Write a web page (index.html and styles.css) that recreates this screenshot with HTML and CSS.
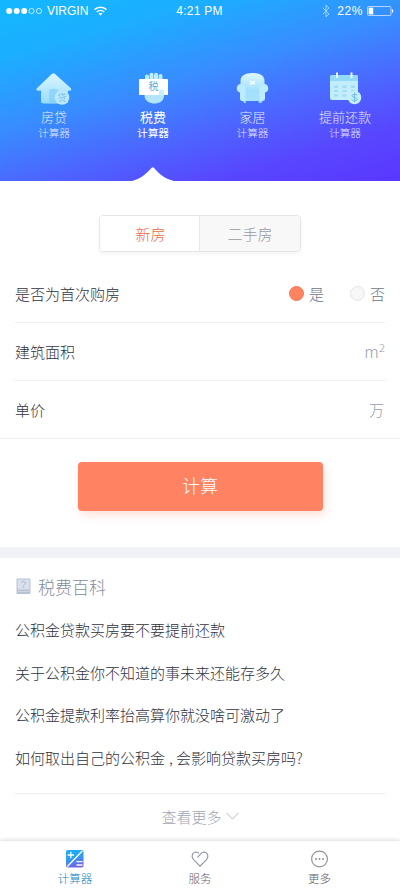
FILE: index.html
```html
<!DOCTYPE html>
<html lang="zh-CN">
<head>
<meta charset="utf-8">
<meta name="viewport" content="width=device-width, initial-scale=1">
<title>税费计算器</title>
<link rel="stylesheet" href="styles.css">
</head>
<body>
<div class="app">
  <header class="hero">
    <div class="status">
      <div class="status-left">
        <svg width="37" height="8" viewBox="0 0 37 8"><g fill="#fff"><circle cx="4.2" cy="4" r="3"/><circle cx="11.7" cy="4" r="3"/><circle cx="19.200" cy="4" r="3"/></g><g fill="none" stroke="#fff" stroke-width=".7"><circle cx="26.500" cy="4" r="2.6"/><circle cx="34" cy="4" r="2.6"/></g></svg>
        <span class="carrier">VIRGIN</span>
        <svg width="13" height="10" viewBox="0 0 13 10" fill="none" stroke="#fff" stroke-width="1.6"><path d="M.6 3.6a8.5 8.5 0 0 1 11.8 0M2.8 6a5.4 5.4 0 0 1 7.4 0"/><path d="M4.6 7.6a2.8 2.8 0 0 1 3.8 0L6.5 9.7z" fill="#fff" stroke="none"/></svg>
      </div>
      <span class="time">4:21 PM</span>
      <div class="status-right">
        <svg width="8" height="14" viewBox="0 0 8 14" fill="none" stroke="#a9dcff" stroke-width=".9"><path d="M.7 3.7l6.2 6.2L4 13V1l2.9 3.1L.7 10.3"/></svg>
        <span class="percent">22%</span>
        <svg width="27" height="10" viewBox="0 0 27 10"><rect x=".5" y=".5" width="23.5" height="9" rx="1" fill="none" stroke="#d5e5ff" stroke-width=".8"/><rect x="1.6" y="1.6" width="4.6" height="6.8" fill="#fff"/><path d="M25 3a2.2 2.2 0 0 1 0 4z" fill="#fff"/></svg>
      </div>
    </div>
    <nav class="tools">
      <a class="tool">
        <svg class="tool-icon" width="40" height="34" viewBox="0 0 40 34">
          <defs><linearGradient id="ice" x1="0" y1="0" x2="0" y2="1"><stop stop-color="#dcf6ff"/><stop offset="1" stop-color="#97dcfc"/></linearGradient></defs>
          <path d="M17.8 2.1q1.6-1.5 3.2 0l15.6 14c1.4 1.3.7 2.6-1 2.6H34V29q0 2.5-2.5 2.500h-22Q7 31.500 7 29V18.700H4.300c-2 0-2.700-1.300-1.200-2.600z" fill="url(#ice)"/>
          <path d="M15 31.500V19q0-2 2-2h5.500q2 0 2 2v12.500z" fill="#7ccbfa" opacity=".6"/>
          <circle cx="28" cy="25.500" r="7.300" fill="#bbe8fd"/>
          <text class="coin" x="28" y="29" text-anchor="middle">贷</text>
        </svg>
        <span class="tool-name">房贷</span><span class="tool-sub">计算器</span>
      </a>
      <a class="tool active">
        <svg class="tool-icon" width="40" height="34" viewBox="0 0 40 34">
          <g fill="#bcecff"><rect x="12" y="2.500" width="4" height="10" rx="2"/><rect x="16.500" y=".8" width="4" height="10" rx="2"/><rect x="21" y=".8" width="4" height="10" rx="2"/><rect x="25.500" y="2" width="4" height="10" rx="2"/></g>
          <path d="M11.500 21H31v3c0 5-5 7.500-9.500 7.500s-10-2.500-10-7.500z" fill="#b0e5fd"/>
          <rect x="6" y="7" width="29" height="16" rx=".8" fill="#fff"/>
          <path d="M26 23v-3q0-2.500 2.500-2.500T31 20v4z" fill="#c7edff"/>
          <text class="card-mark" x="20.500" y="18.400" text-anchor="middle">税</text>
        </svg>
        <span class="tool-name">税费</span><span class="tool-sub">计算器</span>
      </a>
      <a class="tool">
        <svg class="tool-icon" width="40" height="34" viewBox="0 0 40 34">
          <path d="M9 28h4v3H11zM25 28h5l-1.500 3H26z" fill="#93d7fa"/>
          <path d="M7.500 22V9c0-5 4-8 12-8s12 3 12 8v13z" fill="url(#ice)"/>
          <path d="M11 20h17v9H11z" fill="#a5e1fc"/>
          <path d="M8 12c3.500 0 5 2.500 4.500 5.500V29H9.500Q7 29 7 26.500V20.500c-4.500-1-4.500-8.500 1-8.500zM31 12c-3.500 0-5 2.500-4.500 5.500V29h3Q32 29 32 26.500V20.500c4.500-1 4.500-8.500-1-8.500z" fill="#bdebff"/>
          <path d="M17 9l5 3.500M22 9l-5 3.500" stroke="#fff" stroke-width="1.300"/>
        </svg>
        <span class="tool-name">家居</span><span class="tool-sub">计算器</span>
      </a>
      <a class="tool">
        <svg class="tool-icon" width="40" height="34" viewBox="0 0 40 34">
          <rect x="5" y="3" width="28" height="25" rx="2" fill="#c1edfd"/>
          <path d="M5 9V5q0-2 2-2h24q2 0 2 2v4z" fill="#94dafc"/>
          <path d="M12 .5v5.500M26.500 .5v5.500" stroke="#e9faff" stroke-width="2"/>
          <path d="M9 13.500h4V16H9zm8.500 0h4V16h-4zm8.500 0h4V16h-4zM9 18h4v2H9zm8.500 0h4v2h-4zm8.500 0h4v2h-4zM9 22.500h4v2H9zm8.500 0h4v2h-4z" fill="#9fdcfa"/>
          <circle cx="29.500" cy="25.500" r="6.800" fill="#c5efff"/>
          <path d="M32.200 23.300c-.8-1.500-5.300-1.500-5.300.5 0 2.200 5.500 1.200 5.500 3.500 0 2-4.800 2-5.800.2M29.500 20.600v9.800" fill="none" stroke="#74bdf2" stroke-width="1"/>
        </svg>
        <span class="tool-name">提前还款</span><span class="tool-sub">计算器</span>
      </a>
    </nav>
    <svg class="notch" width="42" height="14" viewBox="0 0 42 14"><path d="M0 14C8.500 12 13 8 19.700 .8q1.100-1 2.200 0C28 8 33 12 42 14z" fill="#fff"/></svg>
  </header>

  <main>
    <section class="form">
      <div class="segmented"><span class="segment selected">新房</span><span class="segment">二手房</span></div>
      <div class="row">
        <span>是否为首次购房</span>
        <div class="choices"><span class="choice"><i class="radio checked"></i>是</span><span class="choice"><i class="radio"></i>否</span></div>
      </div>
      <div class="row"><span>建筑面积</span><span class="unit area">m<sup>2</sup></span></div>
      <div class="row"><span>单价</span><span class="unit">万</span></div>
      <div class="action"><button class="submit">计算</button></div>
    </section>
    <section class="wiki">
      <h2 class="wiki-title">
        <svg width="15" height="17" viewBox="0 0 15 17"><rect x=".5" y=".5" width="14" height="15.500" rx="1" fill="#b8c2d5"/><rect x="1.500" y="1.500" width="12" height="10" fill="#d9e0ec"/><path d="M1.500 13.500h12" stroke="#cfd6e3"/><path d="M5.600 5c0-2.200 3.800-2 3.800 0 0 1.300-1.900 1.200-1.900 2.700M7.500 8.800V10" fill="none" stroke="#a9b5ca"/></svg>
        税费百科
      </h2>
      <ul class="articles">
        <li>公积金贷款买房要不要提前还款</li>
        <li>关于公积金你不知道的事未来还能存多久</li>
        <li>公积金提款利率抬高算你就没啥可激动了</li>
        <li>如何取出自己的公积金<span class="comma">,</span>会影响贷款买房吗?</li>
      </ul>
      <div class="more">查看更多<svg width="13" height="8" viewBox="0 0 13 8" fill="none" stroke="#b5bac7"><path d="M.7 1l5.800 6 5.800-6"/></svg></div>
    </section>
  </main>

  <nav class="tabbar">
    <a class="tab current">
      <svg width="18" height="18" viewBox="0 0 18 18"><defs><linearGradient id="calc" x1="0" y1="0" x2=".3" y2="1"><stop stop-color="#16b2fa"/><stop offset=".5" stop-color="#2b9ff5"/><stop offset="1" stop-color="#6e66ed"/></linearGradient></defs><rect width="17.500" height="17.500" rx="2" fill="url(#calc)"/><path d="M16.300 1L1.300 16.500M1.500 5h6.500M4.800 1.800v6.500M10.500 11.700h6M10.500 15h6" stroke="#fff" stroke-width="1.300"/></svg>
      <span>计算器</span>
    </a>
    <a class="tab">
      <svg width="18" height="18" viewBox="0 0 18 18" fill="none" stroke="#8e949f" stroke-width="1.100"><path d="M6.500 7.300L9 4.600c1.500-2.500 4.300-3.200 6.300-1.700 2 1.500 2.100 4.500.2 6.700L9 16.200 2.600 9.700C.6 7.400.7 4.400 2.600 2.900c1.300-1 2.800-1.100 4.200-.4l1 .8"/></svg>
      <span>服务</span>
    </a>
    <a class="tab">
      <svg width="18" height="18" viewBox="0 0 18 18"><circle cx="8.500" cy="9" r="7.900" fill="none" stroke="#8e949f" stroke-width="1.200"/><g fill="#8e949f"><circle cx="5" cy="9" r="1"/><circle cx="8.500" cy="9" r="1"/><circle cx="12" cy="9" r="1"/></g></svg>
      <span>更多</span>
    </a>
  </nav>
</div>
</body>
</html>
```
FILE: styles.css
```css
* { box-sizing: border-box; }
body {
  margin: 0;
  background: #fff;
  color: #30323f;
  font-family: "Noto Sans CJK SC", sans-serif;
  font-weight: 300;
}
svg { display: block; flex: none; }
.app { width: 400px; height: 893px; display: flex; flex-direction: column; overflow: hidden; }

.hero {
  position: relative;
  flex: none;
  height: 181px;
  color: #fff;
  background: linear-gradient(164deg, #13b8ff 0%, #1caeff 20%, #388dff 44%, #4c66ff 64%, #5846ff 82%, #5a37ff 100%);
}
.status {
  display: grid;
  grid-template-columns: 1fr auto 1fr;
  align-items: center;
  height: 22px;
  padding: 0 6px 0 5px;
  font: 12px/22px "Liberation Sans", sans-serif;
}
.status-left, .status-right { display: flex; align-items: center; }
.carrier { margin: 0 6px 0 5px; }
.time { letter-spacing: .25px; }
.status-right { justify-content: flex-end; }
.percent { margin: 0 4px 0 7px; letter-spacing: .6px; }

.tools {
  display: grid;
  grid-template-columns: 100px 98px 101px 84px;
  padding: 50px 0 0 4px;
}
.tool { display: flex; flex-direction: column; align-items: center; }
.tool-name { margin-top: 1px; font-size: 13px; line-height: 20px; white-space: nowrap; opacity: .85; }
.tool-sub { font-size: 10.700px; line-height: 12px; opacity: .8; }
.tool.active { font-weight: 400; }
.tool.active span { opacity: 1; }
.coin { font-size: 9px; fill: #5fb3ef; }
.card-mark { font-size: 10px; fill: #5cabdf; }
.notch { position: absolute; left: 132px; bottom: 0; }

.form { padding-top: 34px; }
.segmented {
  display: grid;
  grid-template-columns: 1fr 1fr;
  width: 202px;
  height: 37px;
  margin: 0 99px;
  border: 1px solid #e5e6e8;
  border-radius: 4px;
  background: #fff;
  box-shadow: 0 2px 4px rgba(0, 0, 0, .05);
  overflow: hidden;
}
.segment { text-align: center; font-size: 15px; line-height: 35px; color: #999ba3; background: #f8f8f8; }
.segment.selected { color: #e9694a; background: #fff; border-right: 1px solid #e8e8ea; padding-left: 2px; }
.row {
  display: flex;
  align-items: center;
  justify-content: space-between;
  height: 58px;
  margin: 0 15px;
  border-bottom: 1px solid #f0f0f1;
  font-size: 15px;
}
.segmented + .row { margin-top: 13px; }
.choices { display: flex; gap: 26px; color: #6e7588; }
.choice { display: flex; align-items: center; gap: 5px; }
.radio { width: 15px; height: 15px; border: 1px solid #e4e5e7; border-radius: 50%; background: #f7f7f7; }
.radio.checked { border-color: #ee795b; background: #ff8261; }
.unit { color: #969eae; }
.area { padding-bottom: 2px; font-size: 16px; letter-spacing: .5px; }
.area sup { font-size: 11px; line-height: 0; letter-spacing: 0; vertical-align: 6px; }
.row:has(+ .action) { margin: 0; padding: 0 16px 0 15px; }
.action { padding: 23px 77px 36px 78px; }
.submit {
  display: block;
  width: 100%;
  height: 49px;
  padding: 0 1px 4px 0;
  border: 0;
  border-radius: 4px;
  background: #ff8262;
  box-shadow: 2px 4px 8px rgba(255, 130, 98, .25);
  color: #fff;
  font: inherit;
  font-size: 18px;
}

.wiki { border-top: 11px solid #f0f2f6; padding: 15px 15px 0; }
.wiki-title {
  display: flex;
  align-items: center;
  gap: 7px;
  height: 28px;
  margin: 0;
  padding: 0 0 1px 1px;
  color: #858b9b;
  font-size: 17px;
  font-weight: 300;
}
.articles { list-style: none; height: 193px; margin: 0; padding: 8px 0 0; border-bottom: 1px solid #ececef; }
.articles li { font-size: 15px; line-height: 42.700px; white-space: nowrap; }
.comma { display: inline-block; width: 11px; padding-left: 4px; }
.more { display: flex; align-items: center; justify-content: center; gap: 4px; height: 44px; color: #a0a5b4; font-size: 15px; }

.tabbar {
  position: relative;
  display: grid;
  grid-template-columns: 150px 100px 139px;
  flex: none;
  height: 52px;
  margin-top: auto;
  background: #fff;
  box-shadow: 0 -1px 4px rgba(0, 0, 0, .15);
}
.tab { display: flex; flex-direction: column; align-items: center; padding-top: 9px; color: #5c616c; font-size: 11.500px; line-height: 20px; }
.tab.current { color: #1685cd; }
```
